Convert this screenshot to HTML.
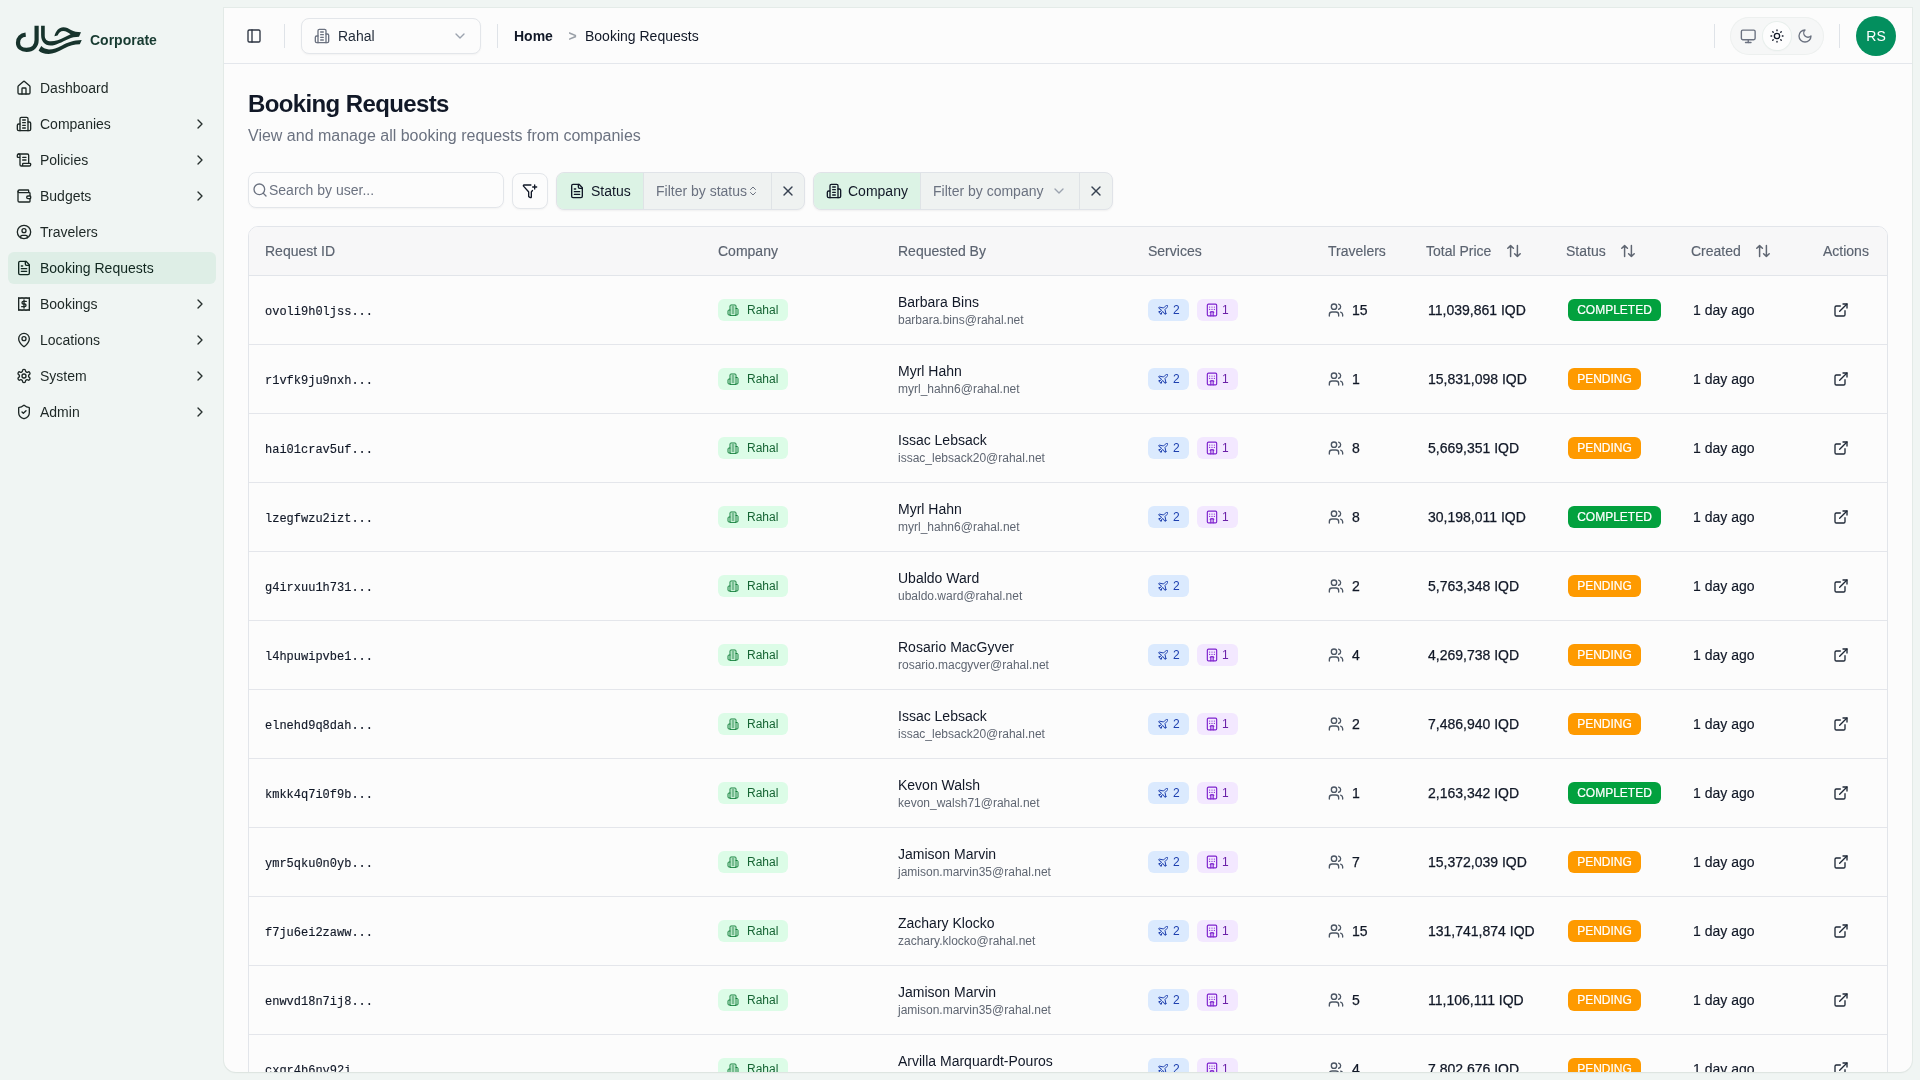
<!DOCTYPE html>
<html><head><meta charset="utf-8">
<style>
*{box-sizing:border-box;margin:0;padding:0}
html,body{width:1920px;height:1080px;overflow:hidden}
body{will-change:transform}
body{background:#f0f5f3;font-family:"Liberation Sans",sans-serif;color:#111827;position:relative}
svg{display:block}
.ab{position:absolute}
.ic{fill:none;stroke:currentColor;stroke-linecap:round;stroke-linejoin:round}
.t{position:absolute;white-space:nowrap;line-height:16px}
#panel{position:absolute;left:224px;top:8px;width:1688px;height:1064px;background:#fcfcfc;border-radius:0 0 12px 12px;box-shadow:0 0 0 1px rgba(205,218,212,.35),0 1px 2px rgba(0,0,0,.06);overflow:hidden}
.mono{font-family:"Liberation Mono",monospace;-webkit-text-stroke:0.15px currentColor}
</style></head>
<body>

<svg class="ab" style="left:0;top:0" width="100" height="64" viewBox="0 0 100 64">
<path d="M25.7 34.7 C21 35.2 18 38.5 18 42.7 C18 47 21.5 49.8 26.5 49.8 C32.5 49.8 36.6 46 36.6 40 L36.6 25.7" fill="none" stroke="#17332c" stroke-width="4.2"/>
<path d="M41.1 25.7 L44.75 25.7 L44.75 35.5 C44.75 39.5 47 41.3 51 41.3 C55 41.3 60 39.5 64 37.5 L70.6 34.3 C68 32.5 66 31.1 63.3 31.1 C60.5 31.1 58.8 33 57.5 35.5 L54.4 36.3 C55.5 31 59 27.2 63.3 27.2 C66.5 27.2 68.5 28.5 71 30 C74 31.5 77 32.2 81 32.2 L79 36.8 C75 36.8 72 37.5 68 39.2 C62 41.8 56 45.5 50.5 45.5 C44.5 45.5 41.1 41 41.1 35 Z" fill="#17332c"/>
<path d="M41.3 46.1 C43.5 48.5 46 49.4 49 49.4 C53 49.4 57 48 62 45.5 C68 42.5 73 40.5 81.75 40.1 L79.8 44.35 C74 44.6 70 45.5 64 48.5 C58 51.5 53 54 48.6 54 C44 54 40.5 52.5 38.6 50.5 Z" fill="#17332c"/>
</svg>
<div class="t" style="left:90px;top:32px;font-size:14px;font-weight:bold;color:#173a30">Corporate</div>
<svg class="ab ic" style="left:16px;top:80px;width:16px;height:16px;color:#1d2725;" viewBox="0 0 24 24" stroke-width="2" ><path d="M15 21v-8a1 1 0 0 0-1-1h-4a1 1 0 0 0-1 1v8"/><path d="M3 10a2 2 0 0 1 .709-1.528l7-5.999a2 2 0 0 1 2.582 0l7 5.999A2 2 0 0 1 21 10v9a2 2 0 0 1-2 2H5a2 2 0 0 1-2-2z"/></svg>
<div class="t" style="left:40px;top:80px;font-size:14px;color:#1d2725">Dashboard</div>
<svg class="ab ic" style="left:16px;top:116px;width:16px;height:16px;color:#1d2725;" viewBox="0 0 24 24" stroke-width="2" ><path d="M6 22V4a2 2 0 0 1 2-2h8a2 2 0 0 1 2 2v18Z"/><path d="M6 12H4a2 2 0 0 0-2 2v6a2 2 0 0 0 2 2h2"/><path d="M18 9h2a2 2 0 0 1 2 2v9a2 2 0 0 1-2 2h-2"/><path d="M10 6h4"/><path d="M10 10h4"/><path d="M10 14h4"/><path d="M10 18h4"/></svg>
<div class="t" style="left:40px;top:116px;font-size:14px;color:#1d2725">Companies</div>
<svg class="ab ic" style="left:192px;top:116px;width:16px;height:16px;color:#27302e;" viewBox="0 0 24 24" stroke-width="2" ><path d="m9 18 6-6-6-6"/></svg>
<svg class="ab ic" style="left:16px;top:152px;width:16px;height:16px;color:#1d2725;" viewBox="0 0 24 24" stroke-width="2" ><path d="M15 12h-5"/><path d="M15 8h-5"/><path d="M19 17V5a2 2 0 0 0-2-2H4"/><path d="M8 21h12a2 2 0 0 0 2-2v-1a1 1 0 0 0-1-1H11a1 1 0 0 0-1 1v1a2 2 0 1 1-4 0V5a2 2 0 1 0-4 0v2a1 1 0 0 0 1 1h3"/></svg>
<div class="t" style="left:40px;top:152px;font-size:14px;color:#1d2725">Policies</div>
<svg class="ab ic" style="left:192px;top:152px;width:16px;height:16px;color:#27302e;" viewBox="0 0 24 24" stroke-width="2" ><path d="m9 18 6-6-6-6"/></svg>
<svg class="ab ic" style="left:16px;top:188px;width:16px;height:16px;color:#1d2725;" viewBox="0 0 24 24" stroke-width="2" ><path d="M19 7V4a1 1 0 0 0-1-1H5a2 2 0 0 0 0 4h15a1 1 0 0 1 1 1v4h-3a2 2 0 0 0 0 4h3a1 1 0 0 0 1-1v-2a1 1 0 0 0-1-1"/><path d="M3 5v14a2 2 0 0 0 2 2h15a1 1 0 0 0 1-1v-4"/></svg>
<div class="t" style="left:40px;top:188px;font-size:14px;color:#1d2725">Budgets</div>
<svg class="ab ic" style="left:192px;top:188px;width:16px;height:16px;color:#27302e;" viewBox="0 0 24 24" stroke-width="2" ><path d="m9 18 6-6-6-6"/></svg>
<svg class="ab ic" style="left:16px;top:224px;width:16px;height:16px;color:#1d2725;" viewBox="0 0 24 24" stroke-width="2" ><circle cx="12" cy="12" r="10"/><circle cx="12" cy="10" r="3"/><path d="M7 20.662V19a2 2 0 0 1 2-2h6a2 2 0 0 1 2 2v1.662"/></svg>
<div class="t" style="left:40px;top:224px;font-size:14px;color:#1d2725">Travelers</div>
<div class="ab" style="left:8px;top:252px;width:208px;height:32px;border-radius:6px;background:#deeee6"></div>
<svg class="ab ic" style="left:16px;top:260px;width:16px;height:16px;color:#10261f;" viewBox="0 0 24 24" stroke-width="2" ><path d="M15 2H6a2 2 0 0 0-2 2v16a2 2 0 0 0 2 2h12a2 2 0 0 0 2-2V7Z"/><path d="M14 2v4a2 2 0 0 0 2 2h4"/><path d="M10 9H8"/><path d="M16 13H8"/><path d="M16 17H8"/></svg>
<div class="t" style="left:40px;top:260px;font-size:14px;color:#10261f">Booking Requests</div>
<svg class="ab ic" style="left:16px;top:296px;width:16px;height:16px;color:#1d2725;" viewBox="0 0 24 24" stroke-width="2" ><path d="M4 2.5 L4 21.5 L4 21.5 5 20.7 6 21.5 7 20.7 8 21.5 9 20.7 10 21.5 11 20.7 12 21.5 13 20.7 14 21.5 15 20.7 16 21.5 17 20.7 18 21.5 19 20.7 20 21.5 L20 2.5 L20 2.5 19 3.3 18 2.5 17 3.3 16 2.5 15 3.3 14 2.5 13 3.3 12 2.5 11 3.3 10 2.5 9 3.3 8 2.5 7 3.3 6 2.5 5 3.3 4 2.5 Z"/><path d="M15.5 8H11a2 2 0 0 0 0 4h2a2 2 0 0 1 0 4H8.5"/><path d="M12 6v12"/></svg>
<div class="t" style="left:40px;top:296px;font-size:14px;color:#1d2725">Bookings</div>
<svg class="ab ic" style="left:192px;top:296px;width:16px;height:16px;color:#27302e;" viewBox="0 0 24 24" stroke-width="2" ><path d="m9 18 6-6-6-6"/></svg>
<svg class="ab ic" style="left:16px;top:332px;width:16px;height:16px;color:#1d2725;" viewBox="0 0 24 24" stroke-width="2" ><path d="M20 10c0 4.993-5.539 10.193-7.399 11.799a1 1 0 0 1-1.202 0C9.539 20.193 4 14.993 4 10a8 8 0 0 1 16 0"/><circle cx="12" cy="10" r="3"/></svg>
<div class="t" style="left:40px;top:332px;font-size:14px;color:#1d2725">Locations</div>
<svg class="ab ic" style="left:192px;top:332px;width:16px;height:16px;color:#27302e;" viewBox="0 0 24 24" stroke-width="2" ><path d="m9 18 6-6-6-6"/></svg>
<svg class="ab ic" style="left:16px;top:368px;width:16px;height:16px;color:#1d2725;" viewBox="0 0 24 24" stroke-width="2" ><path d="M12.22 2h-.44a2 2 0 0 0-2 2v.18a2 2 0 0 1-1 1.73l-.43.25a2 2 0 0 1-2 0l-.15-.08a2 2 0 0 0-2.73.73l-.22.38a2 2 0 0 0 .73 2.73l.15.1a2 2 0 0 1 1 1.72v.51a2 2 0 0 1-1 1.74l-.15.09a2 2 0 0 0-.73 2.730l.22.38a2 2 0 0 0 2.73.73l.15-.08a2 2 0 0 1 2 0l.43.25a2 2 0 0 1 1 1.73V20a2 2 0 0 0 2 2h.44a2 2 0 0 0 2-2v-.18a2 2 0 0 1 1-1.73l.43-.25a2 2 0 0 1 2 0l.15.08a2 2 0 0 0 2.73-.73l.22-.39a2 2 0 0 0-.73-2.73l-.15-.08a2 2 0 0 1-1-1.74v-.5a2 2 0 0 1 1-1.74l.15-.09a2 2 0 0 0 .73-2.73l-.22-.38a2 2 0 0 0-2.73-.73l-.15.08a2 2 0 0 1-2 0l-.43-.25a2 2 0 0 1-1-1.73V4a2 2 0 0 0-2-2z"/><circle cx="12" cy="12" r="3"/></svg>
<div class="t" style="left:40px;top:368px;font-size:14px;color:#1d2725">System</div>
<svg class="ab ic" style="left:192px;top:368px;width:16px;height:16px;color:#27302e;" viewBox="0 0 24 24" stroke-width="2" ><path d="m9 18 6-6-6-6"/></svg>
<svg class="ab ic" style="left:16px;top:404px;width:16px;height:16px;color:#1d2725;" viewBox="0 0 24 24" stroke-width="2" ><path d="M20 13c0 5-3.5 7.5-7.66 8.95a1 1 0 0 1-.67-.01C7.5 20.5 4 18 4 13V6a1 1 0 0 1 1-1c2 0 4.5-1.2 6.24-2.72a1.17 1.17 0 0 1 1.52 0C14.51 3.81 17 5 19 5a1 1 0 0 1 1 1z"/><path d="m9 12 2 2 4-4"/></svg>
<div class="t" style="left:40px;top:404px;font-size:14px;color:#1d2725">Admin</div>
<svg class="ab ic" style="left:192px;top:404px;width:16px;height:16px;color:#27302e;" viewBox="0 0 24 24" stroke-width="2" ><path d="m9 18 6-6-6-6"/></svg>
<div id="panel">
<div class="ab" style="left:0;top:55px;width:1688px;height:1px;background:#e4e7ec"></div>
<svg class="ab ic" style="left:22px;top:20px;width:16px;height:16px;color:#2b3340;" viewBox="0 0 24 24" stroke-width="2" ><rect width="18" height="18" x="3" y="3" rx="2"/><path d="M9 3v18"/></svg>
<div class="ab" style="left:60px;top:16px;width:1px;height:24px;background:#dfe3e8"></div>
<div class="ab" style="left:77px;top:10px;width:180px;height:36px;border:1px solid #e3e6ea;border-radius:8px;background:#fcfcfc;box-shadow:0 1px 2px rgba(0,0,0,.04)"></div>
<svg class="ab ic" style="left:90px;top:20px;width:16px;height:16px;color:#6b7280;" viewBox="0 0 24 24" stroke-width="2" ><path d="M6 22V4a2 2 0 0 1 2-2h8a2 2 0 0 1 2 2v18Z"/><path d="M6 12H4a2 2 0 0 0-2 2v6a2 2 0 0 0 2 2h2"/><path d="M18 9h2a2 2 0 0 1 2 2v9a2 2 0 0 1-2 2h-2"/><path d="M10 6h4"/><path d="M10 10h4"/><path d="M10 14h4"/><path d="M10 18h4"/></svg>
<div class="t" style="left:114px;top:20px;font-size:14px;color:#1f2937">Rahal</div>
<svg class="ab ic" style="left:228px;top:20px;width:16px;height:16px;color:#9ca3af;" viewBox="0 0 24 24" stroke-width="2" ><path d="m6 9 6 6 6-6"/></svg>
<div class="ab" style="left:273px;top:16px;width:1px;height:24px;background:#dfe3e8"></div>
<div class="t" style="left:290px;top:20px;font-size:14px;font-weight:bold;color:#111827">Home</div>
<div class="t" style="left:344.5px;top:20px;font-size:14px;font-weight:bold;color:#9aa0a8">&gt;</div>
<div class="t" style="left:361px;top:20px;font-size:14px;color:#111827">Booking Requests</div>
<div class="ab" style="left:1490px;top:16px;width:1px;height:24px;background:#dfe3e8"></div>
<div class="ab" style="left:1506px;top:9px;width:94px;height:38px;border-radius:19px;background:#f6f7f7;box-shadow:inset 0 0 0 1px #edf0ef"></div>
<div class="ab" style="left:1539px;top:14px;width:28px;height:28px;border-radius:14px;background:#fdfdfd;box-shadow:0 0 0 1px #e8efec,0 1px 2px rgba(0,0,0,.06)"></div>
<svg class="ab ic" style="left:1516px;top:19.5px;width:16.5px;height:16.5px;color:#6b7280;" viewBox="0 0 24 24" stroke-width="2" ><rect width="20" height="14" x="2" y="3" rx="2"/><line x1="8" x2="16" y1="21" y2="21"/><line x1="12" x2="12" y1="17" y2="21"/></svg>
<svg class="ab ic" style="left:1545px;top:20px;width:16px;height:16px;color:#111827;" viewBox="0 0 24 24" stroke-width="2" ><circle cx="12" cy="12" r="4"/><path d="M12 3v1"/><path d="M12 20v1"/><path d="M3 12h1"/><path d="M20 12h1"/><path d="m18.364 5.636-.707.707"/><path d="m6.343 17.657-.707.707"/><path d="m5.636 5.636.707.707"/><path d="m17.657 17.657.707.707"/></svg>
<svg class="ab ic" style="left:1573px;top:20px;width:16px;height:16px;color:#6b7280;" viewBox="0 0 24 24" stroke-width="2" ><path d="M12 3a6 6 0 0 0 9 9 9 9 0 1 1-9-9Z"/></svg>
<div class="ab" style="left:1615px;top:16px;width:1px;height:24px;background:#dfe3e8"></div>
<div class="ab" style="left:1632px;top:8px;width:40px;height:40px;border-radius:20px;background:#038f5e;color:#fff;font-size:14px;line-height:40px;text-align:center">RS</div>
<div class="t" style="left:24px;top:82px;font-size:24px;line-height:28px;font-weight:bold;color:#111827;letter-spacing:-0.62px">Booking Requests</div>
<div class="t" style="left:24px;top:119px;font-size:16px;line-height:18px;color:#6b7280">View and manage all booking requests from companies</div>
<div class="ab" style="left:24px;top:164px;width:256px;height:36px;border:1px solid #e3e6ea;border-radius:8px;background:#fcfcfc;box-shadow:0 1px 2px rgba(0,0,0,.04)"></div>
<svg class="ab ic" style="left:28px;top:174px;width:16px;height:16px;color:#6b7280;" viewBox="0 0 24 24" stroke-width="2" ><circle cx="11" cy="11" r="8"/><path d="m21 21-4.3-4.3"/></svg>
<div class="t" style="left:45px;top:174px;font-size:14px;color:#6b7280">Search by user...</div>
<div class="ab" style="left:288px;top:165px;width:36px;height:36px;border:1px solid #e3e6ea;border-radius:8px;background:#fcfcfc;box-shadow:0 1px 2px rgba(0,0,0,.04)"></div>
<svg class="ab ic" style="left:298px;top:175px;width:16px;height:16px;color:#111827;" viewBox="0 0 24 24" stroke-width="2" ><path d="M13.354 3H3a1 1 0 0 0-.742 1.67l7.225 7.989A2 2 0 0 1 10 14v6a1 1 0 0 0 .553.895l2 1A1 1 0 0 0 14 21v-7a2 2 0 0 1 .517-1.341l1.218-1.348"/><path d="M16 6h6"/><path d="M19 3v6"/></svg>
<div class="ab" style="left:332px;top:164px;width:249px;height:38px;border:1px solid #e0e3e8;border-radius:8px;background:#eff2f1;overflow:hidden;box-shadow:0 1px 2px rgba(0,0,0,.05)"><div class="ab" style="left:0;top:0;width:87px;height:36px;background:#dcf3e5;border-right:1px solid #dfe3e6"></div><div class="ab" style="left:214px;top:0;width:1px;height:36px;background:#dfe3e6"></div></div>
<svg class="ab ic" style="left:345px;top:175px;width:16px;height:16px;color:#111827;" viewBox="0 0 24 24" stroke-width="2" ><path d="M15 2H6a2 2 0 0 0-2 2v16a2 2 0 0 0 2 2h12a2 2 0 0 0 2-2V7Z"/><path d="M14 2v4a2 2 0 0 0 2 2h4"/><path d="M10 9H8"/><path d="M16 13H8"/><path d="M16 17H8"/></svg>
<div class="t" style="left:367px;top:175px;font-size:14px;color:#111827">Status</div>
<div class="t" style="left:432px;top:175px;font-size:14px;color:#6b7280">Filter by status</div>
<svg class="ab ic" style="left:523px;top:177px;width:12px;height:12px;color:#6b7280;" viewBox="0 0 24 24" stroke-width="2" ><path d="m7 15 5 5 5-5"/><path d="m7 9 5-5 5 5"/></svg>
<svg class="ab ic" style="left:556px;top:175px;width:16px;height:16px;color:#374151;" viewBox="0 0 24 24" stroke-width="2" ><path d="M18 6 6 18"/><path d="m6 6 12 12"/></svg>
<div class="ab" style="left:589px;top:164px;width:300px;height:38px;border:1px solid #e0e3e8;border-radius:8px;background:#eff2f1;overflow:hidden;box-shadow:0 1px 2px rgba(0,0,0,.05)"><div class="ab" style="left:0;top:0;width:107px;height:36px;background:#dcf3e5;border-right:1px solid #dfe3e6"></div><div class="ab" style="left:265px;top:0;width:1px;height:36px;background:#dfe3e6"></div></div>
<svg class="ab ic" style="left:602px;top:175px;width:16px;height:16px;color:#111827;" viewBox="0 0 24 24" stroke-width="2" ><path d="M6 22V4a2 2 0 0 1 2-2h8a2 2 0 0 1 2 2v18Z"/><path d="M6 12H4a2 2 0 0 0-2 2v6a2 2 0 0 0 2 2h2"/><path d="M18 9h2a2 2 0 0 1 2 2v9a2 2 0 0 1-2 2h-2"/><path d="M10 6h4"/><path d="M10 10h4"/><path d="M10 14h4"/><path d="M10 18h4"/></svg>
<div class="t" style="left:624px;top:175px;font-size:14px;color:#111827">Company</div>
<div class="t" style="left:709px;top:175px;font-size:14px;color:#6b7280">Filter by company</div>
<svg class="ab ic" style="left:827px;top:175px;width:16px;height:16px;color:#9ca3af;" viewBox="0 0 24 24" stroke-width="2" ><path d="m6 9 6 6 6-6"/></svg>
<svg class="ab ic" style="left:864px;top:175px;width:16px;height:16px;color:#374151;" viewBox="0 0 24 24" stroke-width="2" ><path d="M18 6 6 18"/><path d="m6 6 12 12"/></svg>
<div class="ab" style="left:24px;top:218px;width:1640px;height:900px;border:1px solid #e2e5ea;border-radius:10px;background:#fcfcfc;overflow:hidden">
<div class="ab" style="left:0;top:0;width:1640px;height:49px;background:#f7f7f8;border-bottom:1px solid #e2e5ea"></div>
<div class="ab" style="left:0;top:117px;width:1640px;height:1px;background:#e4e6eb"></div>
<div class="ab" style="left:0;top:186px;width:1640px;height:1px;background:#e4e6eb"></div>
<div class="ab" style="left:0;top:255px;width:1640px;height:1px;background:#e4e6eb"></div>
<div class="ab" style="left:0;top:324px;width:1640px;height:1px;background:#e4e6eb"></div>
<div class="ab" style="left:0;top:393px;width:1640px;height:1px;background:#e4e6eb"></div>
<div class="ab" style="left:0;top:462px;width:1640px;height:1px;background:#e4e6eb"></div>
<div class="ab" style="left:0;top:531px;width:1640px;height:1px;background:#e4e6eb"></div>
<div class="ab" style="left:0;top:600px;width:1640px;height:1px;background:#e4e6eb"></div>
<div class="ab" style="left:0;top:669px;width:1640px;height:1px;background:#e4e6eb"></div>
<div class="ab" style="left:0;top:738px;width:1640px;height:1px;background:#e4e6eb"></div>
<div class="ab" style="left:0;top:807px;width:1640px;height:1px;background:#e4e6eb"></div>
<div class="ab" style="left:0;top:876px;width:1640px;height:1px;background:#e4e6eb"></div>
</div>
<div class="t" style="left:41px;top:235px;font-size:14px;color:#5b6370;-webkit-text-stroke:0.15px #5b6370">Request ID</div>
<div class="t" style="left:494px;top:235px;font-size:14px;color:#5b6370;-webkit-text-stroke:0.15px #5b6370">Company</div>
<div class="t" style="left:674px;top:235px;font-size:14px;color:#5b6370;-webkit-text-stroke:0.15px #5b6370">Requested By</div>
<div class="t" style="left:924px;top:235px;font-size:14px;color:#5b6370;-webkit-text-stroke:0.15px #5b6370">Services</div>
<div class="t" style="left:1104px;top:235px;font-size:14px;color:#5b6370;-webkit-text-stroke:0.15px #5b6370">Travelers</div>
<div class="t" style="left:1202px;top:235px;font-size:14px;color:#5b6370;-webkit-text-stroke:0.15px #5b6370">Total Price</div>
<svg class="ab ic" style="left:1283px;top:236px;width:15px;height:14px;color:#5f6672" viewBox="0 0 15 14" stroke-width="1.5"><path d="M3.6 1.5v11M0.8 4.3l2.8-2.8 2.8 2.8M10.4 1.5v11M7.6 9.7l2.8 2.8 2.8-2.8"/></svg>
<div class="t" style="left:1342px;top:235px;font-size:14px;color:#5b6370;-webkit-text-stroke:0.15px #5b6370">Status</div>
<svg class="ab ic" style="left:1397px;top:236px;width:15px;height:14px;color:#5f6672" viewBox="0 0 15 14" stroke-width="1.5"><path d="M3.6 1.5v11M0.8 4.3l2.8-2.8 2.8 2.8M10.4 1.5v11M7.6 9.7l2.8 2.8 2.8-2.8"/></svg>
<div class="t" style="left:1467px;top:235px;font-size:14px;color:#5b6370;-webkit-text-stroke:0.15px #5b6370">Created</div>
<svg class="ab ic" style="left:1532px;top:236px;width:15px;height:14px;color:#5f6672" viewBox="0 0 15 14" stroke-width="1.5"><path d="M3.6 1.5v11M0.8 4.3l2.8-2.8 2.8 2.8M10.4 1.5v11M7.6 9.7l2.8 2.8 2.8-2.8"/></svg>
<div class="t" style="left:1599px;top:235px;font-size:14px;color:#5b6370;-webkit-text-stroke:0.15px #5b6370">Actions</div>
<div class="t mono" style="left:41px;top:296px;font-size:12px;color:#111827">ovoli9h0ljss...</div>
<div class="ab" style="left:494px;top:291px;width:70px;height:22px;border-radius:6px;background:#dcfce7"></div>
<svg class="ab ic" style="left:503px;top:296px;width:12px;height:12px;color:#15803d;" viewBox="0 0 24 24" stroke-width="2" ><path d="M6 22V4a2 2 0 0 1 2-2h8a2 2 0 0 1 2 2v18Z"/><path d="M6 12H4a2 2 0 0 0-2 2v6a2 2 0 0 0 2 2h2"/><path d="M18 9h2a2 2 0 0 1 2 2v9a2 2 0 0 1-2 2h-2"/><path d="M10 6h4"/><path d="M10 10h4"/><path d="M10 14h4"/><path d="M10 18h4"/></svg>
<div class="t" style="left:523px;top:294px;font-size:12px;color:#166534">Rahal</div>
<div class="t" style="left:674px;top:286px;font-size:14px;color:#111827">Barbara Bins</div>
<div class="t" style="left:674px;top:304px;font-size:12px;color:#5f6672">barbara.bins@rahal.net</div>
<div class="ab" style="left:924px;top:291px;width:41px;height:22px;border-radius:6px;background:#dbeafe"></div>
<svg class="ab ic" style="left:933px;top:296px;width:12px;height:12px;color:#1e40af;" viewBox="0 0 24 24" stroke-width="2" ><path d="M17.8 19.2 16 11l3.5-3.5C21 6 21.5 4 21 3c-1-.5-3 0-4.5 1.5L13 8 4.8 6.2c-.5-.1-.9.1-1.1.5l-.3.5c-.2.5-.1 1 .3 1.3L9 12l-2 3H4l-1 1 3 2 2 3 1-1v-3l3-2 3.5 5.3c.3.4.8.5 1.3.3l.5-.2c.4-.3.6-.7.5-1.2z"/></svg>
<div class="t" style="left:949px;top:294px;font-size:12px;color:#1e40af">2</div>
<div class="ab" style="left:973px;top:291px;width:41px;height:22px;border-radius:6px;background:#f3e8ff"></div>
<svg class="ab ic" style="left:980.7px;top:294.8px;width:14px;height:14px;color:#7e22ce" viewBox="0 0 24 24" stroke-width="2"><path d="M10 22v-6.57"/><path d="M12 11h.01"/><path d="M12 7h.01"/><path d="M14 15.43V22"/><path d="M15 16a5 5 0 0 0-6 0"/><path d="M16 11h.01"/><path d="M16 7h.01"/><path d="M8 11h.01"/><path d="M8 7h.01"/><rect x="4" y="2" width="16" height="20" rx="2"/></svg>
<div class="t" style="left:998px;top:294px;font-size:12px;color:#6b21a8">1</div>
<svg class="ab ic" style="left:1104px;top:294px;width:16px;height:16px;color:#4b5563;" viewBox="0 0 24 24" stroke-width="2" ><path d="M16 21v-2a4 4 0 0 0-4-4H6a4 4 0 0 0-4 4v2"/><circle cx="9" cy="7" r="4"/><path d="M22 21v-2a4 4 0 0 0-3-3.87"/><path d="M16 3.13a4 4 0 0 1 0 7.75"/></svg>
<div class="t" style="left:1128px;top:294px;font-size:14px;color:#111827;-webkit-text-stroke:0.25px #111827">15</div>
<div class="t" style="left:1204px;top:294px;font-size:14px;color:#111827;-webkit-text-stroke:0.25px #111827">11,039,861 IQD</div>
<div class="t" style="left:1344px;top:291px;width:93px;height:22px;line-height:22px;border-radius:6px;background:#02a13e;color:#fff;font-size:12px;-webkit-text-stroke:0.2px #fff;text-align:center">COMPLETED</div>
<div class="t" style="left:1469px;top:294px;font-size:14px;color:#111827;-webkit-text-stroke:0.15px #111827">1 day ago</div>
<svg class="ab ic" style="left:1609px;top:294px;width:16px;height:16px;color:#1f2937;" viewBox="0 0 24 24" stroke-width="2" ><path d="M15 3h6v6"/><path d="M10 14 21 3"/><path d="M18 13v6a2 2 0 0 1-2 2H5a2 2 0 0 1-2-2V8a2 2 0 0 1 2-2h6"/></svg>
<div class="t mono" style="left:41px;top:365px;font-size:12px;color:#111827">r1vfk9ju9nxh...</div>
<div class="ab" style="left:494px;top:360px;width:70px;height:22px;border-radius:6px;background:#dcfce7"></div>
<svg class="ab ic" style="left:503px;top:365px;width:12px;height:12px;color:#15803d;" viewBox="0 0 24 24" stroke-width="2" ><path d="M6 22V4a2 2 0 0 1 2-2h8a2 2 0 0 1 2 2v18Z"/><path d="M6 12H4a2 2 0 0 0-2 2v6a2 2 0 0 0 2 2h2"/><path d="M18 9h2a2 2 0 0 1 2 2v9a2 2 0 0 1-2 2h-2"/><path d="M10 6h4"/><path d="M10 10h4"/><path d="M10 14h4"/><path d="M10 18h4"/></svg>
<div class="t" style="left:523px;top:363px;font-size:12px;color:#166534">Rahal</div>
<div class="t" style="left:674px;top:355px;font-size:14px;color:#111827">Myrl Hahn</div>
<div class="t" style="left:674px;top:373px;font-size:12px;color:#5f6672">myrl_hahn6@rahal.net</div>
<div class="ab" style="left:924px;top:360px;width:41px;height:22px;border-radius:6px;background:#dbeafe"></div>
<svg class="ab ic" style="left:933px;top:365px;width:12px;height:12px;color:#1e40af;" viewBox="0 0 24 24" stroke-width="2" ><path d="M17.8 19.2 16 11l3.5-3.5C21 6 21.5 4 21 3c-1-.5-3 0-4.5 1.5L13 8 4.8 6.2c-.5-.1-.9.1-1.1.5l-.3.5c-.2.5-.1 1 .3 1.3L9 12l-2 3H4l-1 1 3 2 2 3 1-1v-3l3-2 3.5 5.3c.3.4.8.5 1.3.3l.5-.2c.4-.3.6-.7.5-1.2z"/></svg>
<div class="t" style="left:949px;top:363px;font-size:12px;color:#1e40af">2</div>
<div class="ab" style="left:973px;top:360px;width:41px;height:22px;border-radius:6px;background:#f3e8ff"></div>
<svg class="ab ic" style="left:980.7px;top:363.8px;width:14px;height:14px;color:#7e22ce" viewBox="0 0 24 24" stroke-width="2"><path d="M10 22v-6.57"/><path d="M12 11h.01"/><path d="M12 7h.01"/><path d="M14 15.43V22"/><path d="M15 16a5 5 0 0 0-6 0"/><path d="M16 11h.01"/><path d="M16 7h.01"/><path d="M8 11h.01"/><path d="M8 7h.01"/><rect x="4" y="2" width="16" height="20" rx="2"/></svg>
<div class="t" style="left:998px;top:363px;font-size:12px;color:#6b21a8">1</div>
<svg class="ab ic" style="left:1104px;top:363px;width:16px;height:16px;color:#4b5563;" viewBox="0 0 24 24" stroke-width="2" ><path d="M16 21v-2a4 4 0 0 0-4-4H6a4 4 0 0 0-4 4v2"/><circle cx="9" cy="7" r="4"/><path d="M22 21v-2a4 4 0 0 0-3-3.87"/><path d="M16 3.13a4 4 0 0 1 0 7.75"/></svg>
<div class="t" style="left:1128px;top:363px;font-size:14px;color:#111827;-webkit-text-stroke:0.25px #111827">1</div>
<div class="t" style="left:1204px;top:363px;font-size:14px;color:#111827;-webkit-text-stroke:0.25px #111827">15,831,098 IQD</div>
<div class="t" style="left:1344px;top:360px;width:73px;height:22px;line-height:22px;border-radius:6px;background:#fe9a00;color:#fff;font-size:12px;-webkit-text-stroke:0.2px #fff;text-align:center">PENDING</div>
<div class="t" style="left:1469px;top:363px;font-size:14px;color:#111827;-webkit-text-stroke:0.15px #111827">1 day ago</div>
<svg class="ab ic" style="left:1609px;top:363px;width:16px;height:16px;color:#1f2937;" viewBox="0 0 24 24" stroke-width="2" ><path d="M15 3h6v6"/><path d="M10 14 21 3"/><path d="M18 13v6a2 2 0 0 1-2 2H5a2 2 0 0 1-2-2V8a2 2 0 0 1 2-2h6"/></svg>
<div class="t mono" style="left:41px;top:434px;font-size:12px;color:#111827">hai01crav5uf...</div>
<div class="ab" style="left:494px;top:429px;width:70px;height:22px;border-radius:6px;background:#dcfce7"></div>
<svg class="ab ic" style="left:503px;top:434px;width:12px;height:12px;color:#15803d;" viewBox="0 0 24 24" stroke-width="2" ><path d="M6 22V4a2 2 0 0 1 2-2h8a2 2 0 0 1 2 2v18Z"/><path d="M6 12H4a2 2 0 0 0-2 2v6a2 2 0 0 0 2 2h2"/><path d="M18 9h2a2 2 0 0 1 2 2v9a2 2 0 0 1-2 2h-2"/><path d="M10 6h4"/><path d="M10 10h4"/><path d="M10 14h4"/><path d="M10 18h4"/></svg>
<div class="t" style="left:523px;top:432px;font-size:12px;color:#166534">Rahal</div>
<div class="t" style="left:674px;top:424px;font-size:14px;color:#111827">Issac Lebsack</div>
<div class="t" style="left:674px;top:442px;font-size:12px;color:#5f6672">issac_lebsack20@rahal.net</div>
<div class="ab" style="left:924px;top:429px;width:41px;height:22px;border-radius:6px;background:#dbeafe"></div>
<svg class="ab ic" style="left:933px;top:434px;width:12px;height:12px;color:#1e40af;" viewBox="0 0 24 24" stroke-width="2" ><path d="M17.8 19.2 16 11l3.5-3.5C21 6 21.5 4 21 3c-1-.5-3 0-4.5 1.5L13 8 4.8 6.2c-.5-.1-.9.1-1.1.5l-.3.5c-.2.5-.1 1 .3 1.3L9 12l-2 3H4l-1 1 3 2 2 3 1-1v-3l3-2 3.5 5.3c.3.4.8.5 1.3.3l.5-.2c.4-.3.6-.7.5-1.2z"/></svg>
<div class="t" style="left:949px;top:432px;font-size:12px;color:#1e40af">2</div>
<div class="ab" style="left:973px;top:429px;width:41px;height:22px;border-radius:6px;background:#f3e8ff"></div>
<svg class="ab ic" style="left:980.7px;top:432.8px;width:14px;height:14px;color:#7e22ce" viewBox="0 0 24 24" stroke-width="2"><path d="M10 22v-6.57"/><path d="M12 11h.01"/><path d="M12 7h.01"/><path d="M14 15.43V22"/><path d="M15 16a5 5 0 0 0-6 0"/><path d="M16 11h.01"/><path d="M16 7h.01"/><path d="M8 11h.01"/><path d="M8 7h.01"/><rect x="4" y="2" width="16" height="20" rx="2"/></svg>
<div class="t" style="left:998px;top:432px;font-size:12px;color:#6b21a8">1</div>
<svg class="ab ic" style="left:1104px;top:432px;width:16px;height:16px;color:#4b5563;" viewBox="0 0 24 24" stroke-width="2" ><path d="M16 21v-2a4 4 0 0 0-4-4H6a4 4 0 0 0-4 4v2"/><circle cx="9" cy="7" r="4"/><path d="M22 21v-2a4 4 0 0 0-3-3.87"/><path d="M16 3.13a4 4 0 0 1 0 7.75"/></svg>
<div class="t" style="left:1128px;top:432px;font-size:14px;color:#111827;-webkit-text-stroke:0.25px #111827">8</div>
<div class="t" style="left:1204px;top:432px;font-size:14px;color:#111827;-webkit-text-stroke:0.25px #111827">5,669,351 IQD</div>
<div class="t" style="left:1344px;top:429px;width:73px;height:22px;line-height:22px;border-radius:6px;background:#fe9a00;color:#fff;font-size:12px;-webkit-text-stroke:0.2px #fff;text-align:center">PENDING</div>
<div class="t" style="left:1469px;top:432px;font-size:14px;color:#111827;-webkit-text-stroke:0.15px #111827">1 day ago</div>
<svg class="ab ic" style="left:1609px;top:432px;width:16px;height:16px;color:#1f2937;" viewBox="0 0 24 24" stroke-width="2" ><path d="M15 3h6v6"/><path d="M10 14 21 3"/><path d="M18 13v6a2 2 0 0 1-2 2H5a2 2 0 0 1-2-2V8a2 2 0 0 1 2-2h6"/></svg>
<div class="t mono" style="left:41px;top:503px;font-size:12px;color:#111827">lzegfwzu2izt...</div>
<div class="ab" style="left:494px;top:498px;width:70px;height:22px;border-radius:6px;background:#dcfce7"></div>
<svg class="ab ic" style="left:503px;top:503px;width:12px;height:12px;color:#15803d;" viewBox="0 0 24 24" stroke-width="2" ><path d="M6 22V4a2 2 0 0 1 2-2h8a2 2 0 0 1 2 2v18Z"/><path d="M6 12H4a2 2 0 0 0-2 2v6a2 2 0 0 0 2 2h2"/><path d="M18 9h2a2 2 0 0 1 2 2v9a2 2 0 0 1-2 2h-2"/><path d="M10 6h4"/><path d="M10 10h4"/><path d="M10 14h4"/><path d="M10 18h4"/></svg>
<div class="t" style="left:523px;top:501px;font-size:12px;color:#166534">Rahal</div>
<div class="t" style="left:674px;top:493px;font-size:14px;color:#111827">Myrl Hahn</div>
<div class="t" style="left:674px;top:511px;font-size:12px;color:#5f6672">myrl_hahn6@rahal.net</div>
<div class="ab" style="left:924px;top:498px;width:41px;height:22px;border-radius:6px;background:#dbeafe"></div>
<svg class="ab ic" style="left:933px;top:503px;width:12px;height:12px;color:#1e40af;" viewBox="0 0 24 24" stroke-width="2" ><path d="M17.8 19.2 16 11l3.5-3.5C21 6 21.5 4 21 3c-1-.5-3 0-4.5 1.5L13 8 4.8 6.2c-.5-.1-.9.1-1.1.5l-.3.5c-.2.5-.1 1 .3 1.3L9 12l-2 3H4l-1 1 3 2 2 3 1-1v-3l3-2 3.5 5.3c.3.4.8.5 1.3.3l.5-.2c.4-.3.6-.7.5-1.2z"/></svg>
<div class="t" style="left:949px;top:501px;font-size:12px;color:#1e40af">2</div>
<div class="ab" style="left:973px;top:498px;width:41px;height:22px;border-radius:6px;background:#f3e8ff"></div>
<svg class="ab ic" style="left:980.7px;top:501.8px;width:14px;height:14px;color:#7e22ce" viewBox="0 0 24 24" stroke-width="2"><path d="M10 22v-6.57"/><path d="M12 11h.01"/><path d="M12 7h.01"/><path d="M14 15.43V22"/><path d="M15 16a5 5 0 0 0-6 0"/><path d="M16 11h.01"/><path d="M16 7h.01"/><path d="M8 11h.01"/><path d="M8 7h.01"/><rect x="4" y="2" width="16" height="20" rx="2"/></svg>
<div class="t" style="left:998px;top:501px;font-size:12px;color:#6b21a8">1</div>
<svg class="ab ic" style="left:1104px;top:501px;width:16px;height:16px;color:#4b5563;" viewBox="0 0 24 24" stroke-width="2" ><path d="M16 21v-2a4 4 0 0 0-4-4H6a4 4 0 0 0-4 4v2"/><circle cx="9" cy="7" r="4"/><path d="M22 21v-2a4 4 0 0 0-3-3.87"/><path d="M16 3.13a4 4 0 0 1 0 7.75"/></svg>
<div class="t" style="left:1128px;top:501px;font-size:14px;color:#111827;-webkit-text-stroke:0.25px #111827">8</div>
<div class="t" style="left:1204px;top:501px;font-size:14px;color:#111827;-webkit-text-stroke:0.25px #111827">30,198,011 IQD</div>
<div class="t" style="left:1344px;top:498px;width:93px;height:22px;line-height:22px;border-radius:6px;background:#02a13e;color:#fff;font-size:12px;-webkit-text-stroke:0.2px #fff;text-align:center">COMPLETED</div>
<div class="t" style="left:1469px;top:501px;font-size:14px;color:#111827;-webkit-text-stroke:0.15px #111827">1 day ago</div>
<svg class="ab ic" style="left:1609px;top:501px;width:16px;height:16px;color:#1f2937;" viewBox="0 0 24 24" stroke-width="2" ><path d="M15 3h6v6"/><path d="M10 14 21 3"/><path d="M18 13v6a2 2 0 0 1-2 2H5a2 2 0 0 1-2-2V8a2 2 0 0 1 2-2h6"/></svg>
<div class="t mono" style="left:41px;top:572px;font-size:12px;color:#111827">g4irxuu1h731...</div>
<div class="ab" style="left:494px;top:567px;width:70px;height:22px;border-radius:6px;background:#dcfce7"></div>
<svg class="ab ic" style="left:503px;top:572px;width:12px;height:12px;color:#15803d;" viewBox="0 0 24 24" stroke-width="2" ><path d="M6 22V4a2 2 0 0 1 2-2h8a2 2 0 0 1 2 2v18Z"/><path d="M6 12H4a2 2 0 0 0-2 2v6a2 2 0 0 0 2 2h2"/><path d="M18 9h2a2 2 0 0 1 2 2v9a2 2 0 0 1-2 2h-2"/><path d="M10 6h4"/><path d="M10 10h4"/><path d="M10 14h4"/><path d="M10 18h4"/></svg>
<div class="t" style="left:523px;top:570px;font-size:12px;color:#166534">Rahal</div>
<div class="t" style="left:674px;top:562px;font-size:14px;color:#111827">Ubaldo Ward</div>
<div class="t" style="left:674px;top:580px;font-size:12px;color:#5f6672">ubaldo.ward@rahal.net</div>
<div class="ab" style="left:924px;top:567px;width:41px;height:22px;border-radius:6px;background:#dbeafe"></div>
<svg class="ab ic" style="left:933px;top:572px;width:12px;height:12px;color:#1e40af;" viewBox="0 0 24 24" stroke-width="2" ><path d="M17.8 19.2 16 11l3.5-3.5C21 6 21.5 4 21 3c-1-.5-3 0-4.5 1.5L13 8 4.8 6.2c-.5-.1-.9.1-1.1.5l-.3.5c-.2.5-.1 1 .3 1.3L9 12l-2 3H4l-1 1 3 2 2 3 1-1v-3l3-2 3.5 5.3c.3.4.8.5 1.3.3l.5-.2c.4-.3.6-.7.5-1.2z"/></svg>
<div class="t" style="left:949px;top:570px;font-size:12px;color:#1e40af">2</div>
<svg class="ab ic" style="left:1104px;top:570px;width:16px;height:16px;color:#4b5563;" viewBox="0 0 24 24" stroke-width="2" ><path d="M16 21v-2a4 4 0 0 0-4-4H6a4 4 0 0 0-4 4v2"/><circle cx="9" cy="7" r="4"/><path d="M22 21v-2a4 4 0 0 0-3-3.87"/><path d="M16 3.13a4 4 0 0 1 0 7.75"/></svg>
<div class="t" style="left:1128px;top:570px;font-size:14px;color:#111827;-webkit-text-stroke:0.25px #111827">2</div>
<div class="t" style="left:1204px;top:570px;font-size:14px;color:#111827;-webkit-text-stroke:0.25px #111827">5,763,348 IQD</div>
<div class="t" style="left:1344px;top:567px;width:73px;height:22px;line-height:22px;border-radius:6px;background:#fe9a00;color:#fff;font-size:12px;-webkit-text-stroke:0.2px #fff;text-align:center">PENDING</div>
<div class="t" style="left:1469px;top:570px;font-size:14px;color:#111827;-webkit-text-stroke:0.15px #111827">1 day ago</div>
<svg class="ab ic" style="left:1609px;top:570px;width:16px;height:16px;color:#1f2937;" viewBox="0 0 24 24" stroke-width="2" ><path d="M15 3h6v6"/><path d="M10 14 21 3"/><path d="M18 13v6a2 2 0 0 1-2 2H5a2 2 0 0 1-2-2V8a2 2 0 0 1 2-2h6"/></svg>
<div class="t mono" style="left:41px;top:641px;font-size:12px;color:#111827">l4hpuwipvbe1...</div>
<div class="ab" style="left:494px;top:636px;width:70px;height:22px;border-radius:6px;background:#dcfce7"></div>
<svg class="ab ic" style="left:503px;top:641px;width:12px;height:12px;color:#15803d;" viewBox="0 0 24 24" stroke-width="2" ><path d="M6 22V4a2 2 0 0 1 2-2h8a2 2 0 0 1 2 2v18Z"/><path d="M6 12H4a2 2 0 0 0-2 2v6a2 2 0 0 0 2 2h2"/><path d="M18 9h2a2 2 0 0 1 2 2v9a2 2 0 0 1-2 2h-2"/><path d="M10 6h4"/><path d="M10 10h4"/><path d="M10 14h4"/><path d="M10 18h4"/></svg>
<div class="t" style="left:523px;top:639px;font-size:12px;color:#166534">Rahal</div>
<div class="t" style="left:674px;top:631px;font-size:14px;color:#111827">Rosario MacGyver</div>
<div class="t" style="left:674px;top:649px;font-size:12px;color:#5f6672">rosario.macgyver@rahal.net</div>
<div class="ab" style="left:924px;top:636px;width:41px;height:22px;border-radius:6px;background:#dbeafe"></div>
<svg class="ab ic" style="left:933px;top:641px;width:12px;height:12px;color:#1e40af;" viewBox="0 0 24 24" stroke-width="2" ><path d="M17.8 19.2 16 11l3.5-3.5C21 6 21.5 4 21 3c-1-.5-3 0-4.5 1.5L13 8 4.8 6.2c-.5-.1-.9.1-1.1.5l-.3.5c-.2.5-.1 1 .3 1.3L9 12l-2 3H4l-1 1 3 2 2 3 1-1v-3l3-2 3.5 5.3c.3.4.8.5 1.3.3l.5-.2c.4-.3.6-.7.5-1.2z"/></svg>
<div class="t" style="left:949px;top:639px;font-size:12px;color:#1e40af">2</div>
<div class="ab" style="left:973px;top:636px;width:41px;height:22px;border-radius:6px;background:#f3e8ff"></div>
<svg class="ab ic" style="left:980.7px;top:639.8px;width:14px;height:14px;color:#7e22ce" viewBox="0 0 24 24" stroke-width="2"><path d="M10 22v-6.57"/><path d="M12 11h.01"/><path d="M12 7h.01"/><path d="M14 15.43V22"/><path d="M15 16a5 5 0 0 0-6 0"/><path d="M16 11h.01"/><path d="M16 7h.01"/><path d="M8 11h.01"/><path d="M8 7h.01"/><rect x="4" y="2" width="16" height="20" rx="2"/></svg>
<div class="t" style="left:998px;top:639px;font-size:12px;color:#6b21a8">1</div>
<svg class="ab ic" style="left:1104px;top:639px;width:16px;height:16px;color:#4b5563;" viewBox="0 0 24 24" stroke-width="2" ><path d="M16 21v-2a4 4 0 0 0-4-4H6a4 4 0 0 0-4 4v2"/><circle cx="9" cy="7" r="4"/><path d="M22 21v-2a4 4 0 0 0-3-3.87"/><path d="M16 3.13a4 4 0 0 1 0 7.75"/></svg>
<div class="t" style="left:1128px;top:639px;font-size:14px;color:#111827;-webkit-text-stroke:0.25px #111827">4</div>
<div class="t" style="left:1204px;top:639px;font-size:14px;color:#111827;-webkit-text-stroke:0.25px #111827">4,269,738 IQD</div>
<div class="t" style="left:1344px;top:636px;width:73px;height:22px;line-height:22px;border-radius:6px;background:#fe9a00;color:#fff;font-size:12px;-webkit-text-stroke:0.2px #fff;text-align:center">PENDING</div>
<div class="t" style="left:1469px;top:639px;font-size:14px;color:#111827;-webkit-text-stroke:0.15px #111827">1 day ago</div>
<svg class="ab ic" style="left:1609px;top:639px;width:16px;height:16px;color:#1f2937;" viewBox="0 0 24 24" stroke-width="2" ><path d="M15 3h6v6"/><path d="M10 14 21 3"/><path d="M18 13v6a2 2 0 0 1-2 2H5a2 2 0 0 1-2-2V8a2 2 0 0 1 2-2h6"/></svg>
<div class="t mono" style="left:41px;top:710px;font-size:12px;color:#111827">elnehd9q8dah...</div>
<div class="ab" style="left:494px;top:705px;width:70px;height:22px;border-radius:6px;background:#dcfce7"></div>
<svg class="ab ic" style="left:503px;top:710px;width:12px;height:12px;color:#15803d;" viewBox="0 0 24 24" stroke-width="2" ><path d="M6 22V4a2 2 0 0 1 2-2h8a2 2 0 0 1 2 2v18Z"/><path d="M6 12H4a2 2 0 0 0-2 2v6a2 2 0 0 0 2 2h2"/><path d="M18 9h2a2 2 0 0 1 2 2v9a2 2 0 0 1-2 2h-2"/><path d="M10 6h4"/><path d="M10 10h4"/><path d="M10 14h4"/><path d="M10 18h4"/></svg>
<div class="t" style="left:523px;top:708px;font-size:12px;color:#166534">Rahal</div>
<div class="t" style="left:674px;top:700px;font-size:14px;color:#111827">Issac Lebsack</div>
<div class="t" style="left:674px;top:718px;font-size:12px;color:#5f6672">issac_lebsack20@rahal.net</div>
<div class="ab" style="left:924px;top:705px;width:41px;height:22px;border-radius:6px;background:#dbeafe"></div>
<svg class="ab ic" style="left:933px;top:710px;width:12px;height:12px;color:#1e40af;" viewBox="0 0 24 24" stroke-width="2" ><path d="M17.8 19.2 16 11l3.5-3.5C21 6 21.5 4 21 3c-1-.5-3 0-4.5 1.5L13 8 4.8 6.2c-.5-.1-.9.1-1.1.5l-.3.5c-.2.5-.1 1 .3 1.3L9 12l-2 3H4l-1 1 3 2 2 3 1-1v-3l3-2 3.5 5.3c.3.4.8.5 1.3.3l.5-.2c.4-.3.6-.7.5-1.2z"/></svg>
<div class="t" style="left:949px;top:708px;font-size:12px;color:#1e40af">2</div>
<div class="ab" style="left:973px;top:705px;width:41px;height:22px;border-radius:6px;background:#f3e8ff"></div>
<svg class="ab ic" style="left:980.7px;top:708.8px;width:14px;height:14px;color:#7e22ce" viewBox="0 0 24 24" stroke-width="2"><path d="M10 22v-6.57"/><path d="M12 11h.01"/><path d="M12 7h.01"/><path d="M14 15.43V22"/><path d="M15 16a5 5 0 0 0-6 0"/><path d="M16 11h.01"/><path d="M16 7h.01"/><path d="M8 11h.01"/><path d="M8 7h.01"/><rect x="4" y="2" width="16" height="20" rx="2"/></svg>
<div class="t" style="left:998px;top:708px;font-size:12px;color:#6b21a8">1</div>
<svg class="ab ic" style="left:1104px;top:708px;width:16px;height:16px;color:#4b5563;" viewBox="0 0 24 24" stroke-width="2" ><path d="M16 21v-2a4 4 0 0 0-4-4H6a4 4 0 0 0-4 4v2"/><circle cx="9" cy="7" r="4"/><path d="M22 21v-2a4 4 0 0 0-3-3.87"/><path d="M16 3.13a4 4 0 0 1 0 7.75"/></svg>
<div class="t" style="left:1128px;top:708px;font-size:14px;color:#111827;-webkit-text-stroke:0.25px #111827">2</div>
<div class="t" style="left:1204px;top:708px;font-size:14px;color:#111827;-webkit-text-stroke:0.25px #111827">7,486,940 IQD</div>
<div class="t" style="left:1344px;top:705px;width:73px;height:22px;line-height:22px;border-radius:6px;background:#fe9a00;color:#fff;font-size:12px;-webkit-text-stroke:0.2px #fff;text-align:center">PENDING</div>
<div class="t" style="left:1469px;top:708px;font-size:14px;color:#111827;-webkit-text-stroke:0.15px #111827">1 day ago</div>
<svg class="ab ic" style="left:1609px;top:708px;width:16px;height:16px;color:#1f2937;" viewBox="0 0 24 24" stroke-width="2" ><path d="M15 3h6v6"/><path d="M10 14 21 3"/><path d="M18 13v6a2 2 0 0 1-2 2H5a2 2 0 0 1-2-2V8a2 2 0 0 1 2-2h6"/></svg>
<div class="t mono" style="left:41px;top:779px;font-size:12px;color:#111827">kmkk4q7i0f9b...</div>
<div class="ab" style="left:494px;top:774px;width:70px;height:22px;border-radius:6px;background:#dcfce7"></div>
<svg class="ab ic" style="left:503px;top:779px;width:12px;height:12px;color:#15803d;" viewBox="0 0 24 24" stroke-width="2" ><path d="M6 22V4a2 2 0 0 1 2-2h8a2 2 0 0 1 2 2v18Z"/><path d="M6 12H4a2 2 0 0 0-2 2v6a2 2 0 0 0 2 2h2"/><path d="M18 9h2a2 2 0 0 1 2 2v9a2 2 0 0 1-2 2h-2"/><path d="M10 6h4"/><path d="M10 10h4"/><path d="M10 14h4"/><path d="M10 18h4"/></svg>
<div class="t" style="left:523px;top:777px;font-size:12px;color:#166534">Rahal</div>
<div class="t" style="left:674px;top:769px;font-size:14px;color:#111827">Kevon Walsh</div>
<div class="t" style="left:674px;top:787px;font-size:12px;color:#5f6672">kevon_walsh71@rahal.net</div>
<div class="ab" style="left:924px;top:774px;width:41px;height:22px;border-radius:6px;background:#dbeafe"></div>
<svg class="ab ic" style="left:933px;top:779px;width:12px;height:12px;color:#1e40af;" viewBox="0 0 24 24" stroke-width="2" ><path d="M17.8 19.2 16 11l3.5-3.5C21 6 21.5 4 21 3c-1-.5-3 0-4.5 1.5L13 8 4.8 6.2c-.5-.1-.9.1-1.1.5l-.3.5c-.2.5-.1 1 .3 1.3L9 12l-2 3H4l-1 1 3 2 2 3 1-1v-3l3-2 3.5 5.3c.3.4.8.5 1.3.3l.5-.2c.4-.3.6-.7.5-1.2z"/></svg>
<div class="t" style="left:949px;top:777px;font-size:12px;color:#1e40af">2</div>
<div class="ab" style="left:973px;top:774px;width:41px;height:22px;border-radius:6px;background:#f3e8ff"></div>
<svg class="ab ic" style="left:980.7px;top:777.8px;width:14px;height:14px;color:#7e22ce" viewBox="0 0 24 24" stroke-width="2"><path d="M10 22v-6.57"/><path d="M12 11h.01"/><path d="M12 7h.01"/><path d="M14 15.43V22"/><path d="M15 16a5 5 0 0 0-6 0"/><path d="M16 11h.01"/><path d="M16 7h.01"/><path d="M8 11h.01"/><path d="M8 7h.01"/><rect x="4" y="2" width="16" height="20" rx="2"/></svg>
<div class="t" style="left:998px;top:777px;font-size:12px;color:#6b21a8">1</div>
<svg class="ab ic" style="left:1104px;top:777px;width:16px;height:16px;color:#4b5563;" viewBox="0 0 24 24" stroke-width="2" ><path d="M16 21v-2a4 4 0 0 0-4-4H6a4 4 0 0 0-4 4v2"/><circle cx="9" cy="7" r="4"/><path d="M22 21v-2a4 4 0 0 0-3-3.87"/><path d="M16 3.13a4 4 0 0 1 0 7.75"/></svg>
<div class="t" style="left:1128px;top:777px;font-size:14px;color:#111827;-webkit-text-stroke:0.25px #111827">1</div>
<div class="t" style="left:1204px;top:777px;font-size:14px;color:#111827;-webkit-text-stroke:0.25px #111827">2,163,342 IQD</div>
<div class="t" style="left:1344px;top:774px;width:93px;height:22px;line-height:22px;border-radius:6px;background:#02a13e;color:#fff;font-size:12px;-webkit-text-stroke:0.2px #fff;text-align:center">COMPLETED</div>
<div class="t" style="left:1469px;top:777px;font-size:14px;color:#111827;-webkit-text-stroke:0.15px #111827">1 day ago</div>
<svg class="ab ic" style="left:1609px;top:777px;width:16px;height:16px;color:#1f2937;" viewBox="0 0 24 24" stroke-width="2" ><path d="M15 3h6v6"/><path d="M10 14 21 3"/><path d="M18 13v6a2 2 0 0 1-2 2H5a2 2 0 0 1-2-2V8a2 2 0 0 1 2-2h6"/></svg>
<div class="t mono" style="left:41px;top:848px;font-size:12px;color:#111827">ymr5qku0n0yb...</div>
<div class="ab" style="left:494px;top:843px;width:70px;height:22px;border-radius:6px;background:#dcfce7"></div>
<svg class="ab ic" style="left:503px;top:848px;width:12px;height:12px;color:#15803d;" viewBox="0 0 24 24" stroke-width="2" ><path d="M6 22V4a2 2 0 0 1 2-2h8a2 2 0 0 1 2 2v18Z"/><path d="M6 12H4a2 2 0 0 0-2 2v6a2 2 0 0 0 2 2h2"/><path d="M18 9h2a2 2 0 0 1 2 2v9a2 2 0 0 1-2 2h-2"/><path d="M10 6h4"/><path d="M10 10h4"/><path d="M10 14h4"/><path d="M10 18h4"/></svg>
<div class="t" style="left:523px;top:846px;font-size:12px;color:#166534">Rahal</div>
<div class="t" style="left:674px;top:838px;font-size:14px;color:#111827">Jamison Marvin</div>
<div class="t" style="left:674px;top:856px;font-size:12px;color:#5f6672">jamison.marvin35@rahal.net</div>
<div class="ab" style="left:924px;top:843px;width:41px;height:22px;border-radius:6px;background:#dbeafe"></div>
<svg class="ab ic" style="left:933px;top:848px;width:12px;height:12px;color:#1e40af;" viewBox="0 0 24 24" stroke-width="2" ><path d="M17.8 19.2 16 11l3.5-3.5C21 6 21.5 4 21 3c-1-.5-3 0-4.5 1.5L13 8 4.8 6.2c-.5-.1-.9.1-1.1.5l-.3.5c-.2.5-.1 1 .3 1.3L9 12l-2 3H4l-1 1 3 2 2 3 1-1v-3l3-2 3.5 5.3c.3.4.8.5 1.3.3l.5-.2c.4-.3.6-.7.5-1.2z"/></svg>
<div class="t" style="left:949px;top:846px;font-size:12px;color:#1e40af">2</div>
<div class="ab" style="left:973px;top:843px;width:41px;height:22px;border-radius:6px;background:#f3e8ff"></div>
<svg class="ab ic" style="left:980.7px;top:846.8px;width:14px;height:14px;color:#7e22ce" viewBox="0 0 24 24" stroke-width="2"><path d="M10 22v-6.57"/><path d="M12 11h.01"/><path d="M12 7h.01"/><path d="M14 15.43V22"/><path d="M15 16a5 5 0 0 0-6 0"/><path d="M16 11h.01"/><path d="M16 7h.01"/><path d="M8 11h.01"/><path d="M8 7h.01"/><rect x="4" y="2" width="16" height="20" rx="2"/></svg>
<div class="t" style="left:998px;top:846px;font-size:12px;color:#6b21a8">1</div>
<svg class="ab ic" style="left:1104px;top:846px;width:16px;height:16px;color:#4b5563;" viewBox="0 0 24 24" stroke-width="2" ><path d="M16 21v-2a4 4 0 0 0-4-4H6a4 4 0 0 0-4 4v2"/><circle cx="9" cy="7" r="4"/><path d="M22 21v-2a4 4 0 0 0-3-3.87"/><path d="M16 3.13a4 4 0 0 1 0 7.75"/></svg>
<div class="t" style="left:1128px;top:846px;font-size:14px;color:#111827;-webkit-text-stroke:0.25px #111827">7</div>
<div class="t" style="left:1204px;top:846px;font-size:14px;color:#111827;-webkit-text-stroke:0.25px #111827">15,372,039 IQD</div>
<div class="t" style="left:1344px;top:843px;width:73px;height:22px;line-height:22px;border-radius:6px;background:#fe9a00;color:#fff;font-size:12px;-webkit-text-stroke:0.2px #fff;text-align:center">PENDING</div>
<div class="t" style="left:1469px;top:846px;font-size:14px;color:#111827;-webkit-text-stroke:0.15px #111827">1 day ago</div>
<svg class="ab ic" style="left:1609px;top:846px;width:16px;height:16px;color:#1f2937;" viewBox="0 0 24 24" stroke-width="2" ><path d="M15 3h6v6"/><path d="M10 14 21 3"/><path d="M18 13v6a2 2 0 0 1-2 2H5a2 2 0 0 1-2-2V8a2 2 0 0 1 2-2h6"/></svg>
<div class="t mono" style="left:41px;top:917px;font-size:12px;color:#111827">f7ju6ei2zaww...</div>
<div class="ab" style="left:494px;top:912px;width:70px;height:22px;border-radius:6px;background:#dcfce7"></div>
<svg class="ab ic" style="left:503px;top:917px;width:12px;height:12px;color:#15803d;" viewBox="0 0 24 24" stroke-width="2" ><path d="M6 22V4a2 2 0 0 1 2-2h8a2 2 0 0 1 2 2v18Z"/><path d="M6 12H4a2 2 0 0 0-2 2v6a2 2 0 0 0 2 2h2"/><path d="M18 9h2a2 2 0 0 1 2 2v9a2 2 0 0 1-2 2h-2"/><path d="M10 6h4"/><path d="M10 10h4"/><path d="M10 14h4"/><path d="M10 18h4"/></svg>
<div class="t" style="left:523px;top:915px;font-size:12px;color:#166534">Rahal</div>
<div class="t" style="left:674px;top:907px;font-size:14px;color:#111827">Zachary Klocko</div>
<div class="t" style="left:674px;top:925px;font-size:12px;color:#5f6672">zachary.klocko@rahal.net</div>
<div class="ab" style="left:924px;top:912px;width:41px;height:22px;border-radius:6px;background:#dbeafe"></div>
<svg class="ab ic" style="left:933px;top:917px;width:12px;height:12px;color:#1e40af;" viewBox="0 0 24 24" stroke-width="2" ><path d="M17.8 19.2 16 11l3.5-3.5C21 6 21.5 4 21 3c-1-.5-3 0-4.5 1.5L13 8 4.8 6.2c-.5-.1-.9.1-1.1.5l-.3.5c-.2.5-.1 1 .3 1.3L9 12l-2 3H4l-1 1 3 2 2 3 1-1v-3l3-2 3.5 5.3c.3.4.8.5 1.3.3l.5-.2c.4-.3.6-.7.5-1.2z"/></svg>
<div class="t" style="left:949px;top:915px;font-size:12px;color:#1e40af">2</div>
<div class="ab" style="left:973px;top:912px;width:41px;height:22px;border-radius:6px;background:#f3e8ff"></div>
<svg class="ab ic" style="left:980.7px;top:915.8px;width:14px;height:14px;color:#7e22ce" viewBox="0 0 24 24" stroke-width="2"><path d="M10 22v-6.57"/><path d="M12 11h.01"/><path d="M12 7h.01"/><path d="M14 15.43V22"/><path d="M15 16a5 5 0 0 0-6 0"/><path d="M16 11h.01"/><path d="M16 7h.01"/><path d="M8 11h.01"/><path d="M8 7h.01"/><rect x="4" y="2" width="16" height="20" rx="2"/></svg>
<div class="t" style="left:998px;top:915px;font-size:12px;color:#6b21a8">1</div>
<svg class="ab ic" style="left:1104px;top:915px;width:16px;height:16px;color:#4b5563;" viewBox="0 0 24 24" stroke-width="2" ><path d="M16 21v-2a4 4 0 0 0-4-4H6a4 4 0 0 0-4 4v2"/><circle cx="9" cy="7" r="4"/><path d="M22 21v-2a4 4 0 0 0-3-3.87"/><path d="M16 3.13a4 4 0 0 1 0 7.75"/></svg>
<div class="t" style="left:1128px;top:915px;font-size:14px;color:#111827;-webkit-text-stroke:0.25px #111827">15</div>
<div class="t" style="left:1204px;top:915px;font-size:14px;color:#111827;-webkit-text-stroke:0.25px #111827">131,741,874 IQD</div>
<div class="t" style="left:1344px;top:912px;width:73px;height:22px;line-height:22px;border-radius:6px;background:#fe9a00;color:#fff;font-size:12px;-webkit-text-stroke:0.2px #fff;text-align:center">PENDING</div>
<div class="t" style="left:1469px;top:915px;font-size:14px;color:#111827;-webkit-text-stroke:0.15px #111827">1 day ago</div>
<svg class="ab ic" style="left:1609px;top:915px;width:16px;height:16px;color:#1f2937;" viewBox="0 0 24 24" stroke-width="2" ><path d="M15 3h6v6"/><path d="M10 14 21 3"/><path d="M18 13v6a2 2 0 0 1-2 2H5a2 2 0 0 1-2-2V8a2 2 0 0 1 2-2h6"/></svg>
<div class="t mono" style="left:41px;top:986px;font-size:12px;color:#111827">enwvd18n7ij8...</div>
<div class="ab" style="left:494px;top:981px;width:70px;height:22px;border-radius:6px;background:#dcfce7"></div>
<svg class="ab ic" style="left:503px;top:986px;width:12px;height:12px;color:#15803d;" viewBox="0 0 24 24" stroke-width="2" ><path d="M6 22V4a2 2 0 0 1 2-2h8a2 2 0 0 1 2 2v18Z"/><path d="M6 12H4a2 2 0 0 0-2 2v6a2 2 0 0 0 2 2h2"/><path d="M18 9h2a2 2 0 0 1 2 2v9a2 2 0 0 1-2 2h-2"/><path d="M10 6h4"/><path d="M10 10h4"/><path d="M10 14h4"/><path d="M10 18h4"/></svg>
<div class="t" style="left:523px;top:984px;font-size:12px;color:#166534">Rahal</div>
<div class="t" style="left:674px;top:976px;font-size:14px;color:#111827">Jamison Marvin</div>
<div class="t" style="left:674px;top:994px;font-size:12px;color:#5f6672">jamison.marvin35@rahal.net</div>
<div class="ab" style="left:924px;top:981px;width:41px;height:22px;border-radius:6px;background:#dbeafe"></div>
<svg class="ab ic" style="left:933px;top:986px;width:12px;height:12px;color:#1e40af;" viewBox="0 0 24 24" stroke-width="2" ><path d="M17.8 19.2 16 11l3.5-3.5C21 6 21.5 4 21 3c-1-.5-3 0-4.5 1.5L13 8 4.8 6.2c-.5-.1-.9.1-1.1.5l-.3.5c-.2.5-.1 1 .3 1.3L9 12l-2 3H4l-1 1 3 2 2 3 1-1v-3l3-2 3.5 5.3c.3.4.8.5 1.3.3l.5-.2c.4-.3.6-.7.5-1.2z"/></svg>
<div class="t" style="left:949px;top:984px;font-size:12px;color:#1e40af">2</div>
<div class="ab" style="left:973px;top:981px;width:41px;height:22px;border-radius:6px;background:#f3e8ff"></div>
<svg class="ab ic" style="left:980.7px;top:984.8px;width:14px;height:14px;color:#7e22ce" viewBox="0 0 24 24" stroke-width="2"><path d="M10 22v-6.57"/><path d="M12 11h.01"/><path d="M12 7h.01"/><path d="M14 15.43V22"/><path d="M15 16a5 5 0 0 0-6 0"/><path d="M16 11h.01"/><path d="M16 7h.01"/><path d="M8 11h.01"/><path d="M8 7h.01"/><rect x="4" y="2" width="16" height="20" rx="2"/></svg>
<div class="t" style="left:998px;top:984px;font-size:12px;color:#6b21a8">1</div>
<svg class="ab ic" style="left:1104px;top:984px;width:16px;height:16px;color:#4b5563;" viewBox="0 0 24 24" stroke-width="2" ><path d="M16 21v-2a4 4 0 0 0-4-4H6a4 4 0 0 0-4 4v2"/><circle cx="9" cy="7" r="4"/><path d="M22 21v-2a4 4 0 0 0-3-3.87"/><path d="M16 3.13a4 4 0 0 1 0 7.75"/></svg>
<div class="t" style="left:1128px;top:984px;font-size:14px;color:#111827;-webkit-text-stroke:0.25px #111827">5</div>
<div class="t" style="left:1204px;top:984px;font-size:14px;color:#111827;-webkit-text-stroke:0.25px #111827">11,106,111 IQD</div>
<div class="t" style="left:1344px;top:981px;width:73px;height:22px;line-height:22px;border-radius:6px;background:#fe9a00;color:#fff;font-size:12px;-webkit-text-stroke:0.2px #fff;text-align:center">PENDING</div>
<div class="t" style="left:1469px;top:984px;font-size:14px;color:#111827;-webkit-text-stroke:0.15px #111827">1 day ago</div>
<svg class="ab ic" style="left:1609px;top:984px;width:16px;height:16px;color:#1f2937;" viewBox="0 0 24 24" stroke-width="2" ><path d="M15 3h6v6"/><path d="M10 14 21 3"/><path d="M18 13v6a2 2 0 0 1-2 2H5a2 2 0 0 1-2-2V8a2 2 0 0 1 2-2h6"/></svg>
<div class="t mono" style="left:41px;top:1055px;font-size:12px;color:#111827">cxgr4b6ny92i...</div>
<div class="ab" style="left:494px;top:1050px;width:70px;height:22px;border-radius:6px;background:#dcfce7"></div>
<svg class="ab ic" style="left:503px;top:1055px;width:12px;height:12px;color:#15803d;" viewBox="0 0 24 24" stroke-width="2" ><path d="M6 22V4a2 2 0 0 1 2-2h8a2 2 0 0 1 2 2v18Z"/><path d="M6 12H4a2 2 0 0 0-2 2v6a2 2 0 0 0 2 2h2"/><path d="M18 9h2a2 2 0 0 1 2 2v9a2 2 0 0 1-2 2h-2"/><path d="M10 6h4"/><path d="M10 10h4"/><path d="M10 14h4"/><path d="M10 18h4"/></svg>
<div class="t" style="left:523px;top:1053px;font-size:12px;color:#166534">Rahal</div>
<div class="t" style="left:674px;top:1045px;font-size:14px;color:#111827">Arvilla Marquardt-Pouros</div>
<div class="t" style="left:674px;top:1063px;font-size:12px;color:#5f6672">arvilla.marquardt@rahal.net</div>
<div class="ab" style="left:924px;top:1050px;width:41px;height:22px;border-radius:6px;background:#dbeafe"></div>
<svg class="ab ic" style="left:933px;top:1055px;width:12px;height:12px;color:#1e40af;" viewBox="0 0 24 24" stroke-width="2" ><path d="M17.8 19.2 16 11l3.5-3.5C21 6 21.5 4 21 3c-1-.5-3 0-4.5 1.5L13 8 4.8 6.2c-.5-.1-.9.1-1.1.5l-.3.5c-.2.5-.1 1 .3 1.3L9 12l-2 3H4l-1 1 3 2 2 3 1-1v-3l3-2 3.5 5.3c.3.4.8.5 1.3.3l.5-.2c.4-.3.6-.7.5-1.2z"/></svg>
<div class="t" style="left:949px;top:1053px;font-size:12px;color:#1e40af">2</div>
<div class="ab" style="left:973px;top:1050px;width:41px;height:22px;border-radius:6px;background:#f3e8ff"></div>
<svg class="ab ic" style="left:980.7px;top:1053.8px;width:14px;height:14px;color:#7e22ce" viewBox="0 0 24 24" stroke-width="2"><path d="M10 22v-6.57"/><path d="M12 11h.01"/><path d="M12 7h.01"/><path d="M14 15.43V22"/><path d="M15 16a5 5 0 0 0-6 0"/><path d="M16 11h.01"/><path d="M16 7h.01"/><path d="M8 11h.01"/><path d="M8 7h.01"/><rect x="4" y="2" width="16" height="20" rx="2"/></svg>
<div class="t" style="left:998px;top:1053px;font-size:12px;color:#6b21a8">1</div>
<svg class="ab ic" style="left:1104px;top:1053px;width:16px;height:16px;color:#4b5563;" viewBox="0 0 24 24" stroke-width="2" ><path d="M16 21v-2a4 4 0 0 0-4-4H6a4 4 0 0 0-4 4v2"/><circle cx="9" cy="7" r="4"/><path d="M22 21v-2a4 4 0 0 0-3-3.87"/><path d="M16 3.13a4 4 0 0 1 0 7.75"/></svg>
<div class="t" style="left:1128px;top:1053px;font-size:14px;color:#111827;-webkit-text-stroke:0.25px #111827">4</div>
<div class="t" style="left:1204px;top:1053px;font-size:14px;color:#111827;-webkit-text-stroke:0.25px #111827">7,802,676 IQD</div>
<div class="t" style="left:1344px;top:1050px;width:73px;height:22px;line-height:22px;border-radius:6px;background:#fe9a00;color:#fff;font-size:12px;-webkit-text-stroke:0.2px #fff;text-align:center">PENDING</div>
<div class="t" style="left:1469px;top:1053px;font-size:14px;color:#111827;-webkit-text-stroke:0.15px #111827">1 day ago</div>
<svg class="ab ic" style="left:1609px;top:1053px;width:16px;height:16px;color:#1f2937;" viewBox="0 0 24 24" stroke-width="2" ><path d="M15 3h6v6"/><path d="M10 14 21 3"/><path d="M18 13v6a2 2 0 0 1-2 2H5a2 2 0 0 1-2-2V8a2 2 0 0 1 2-2h6"/></svg>
</div>
</body></html>
